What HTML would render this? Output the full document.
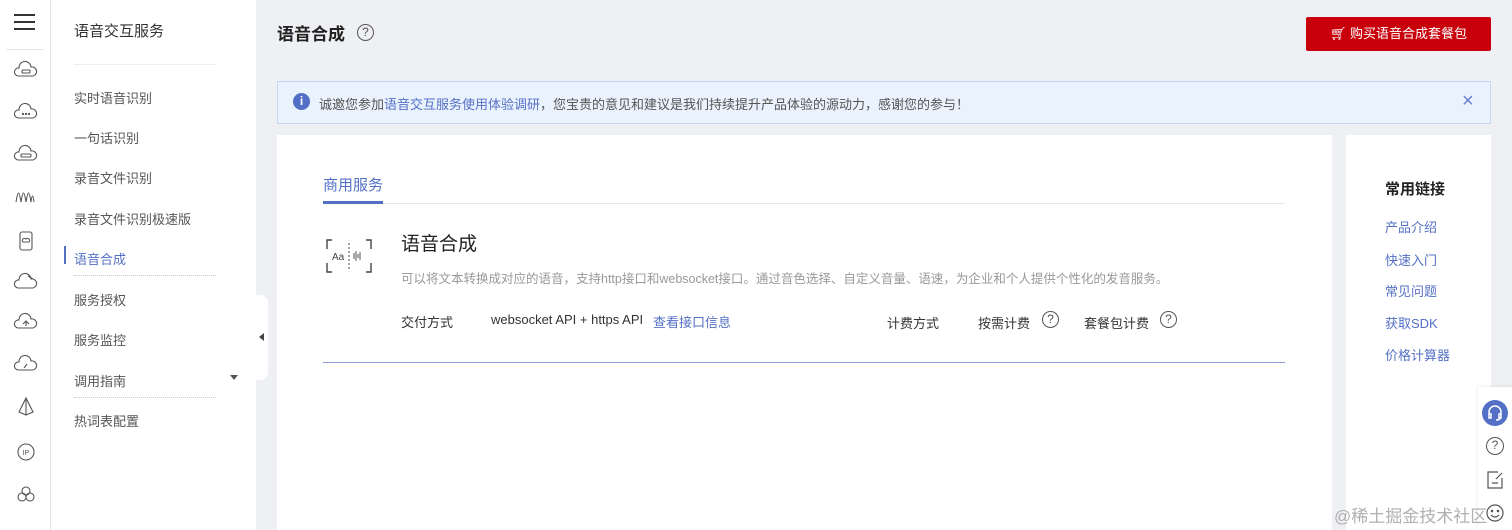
<!DOCTYPE html>
<html><head><meta charset="utf-8"><style>
*{margin:0;padding:0;box-sizing:border-box}
body{width:1512px;height:530px;overflow:hidden;background:#eff0f3;font-family:"Liberation Sans","Noto Sans CJK SC",sans-serif;position:relative;color:#333}
.abs{position:absolute}
#rail{left:0;top:0;width:51px;height:530px;background:#fff;border-right:1px solid #e6e6e6}
#side{left:51px;top:0;width:205px;height:530px;background:#fff}
.mi{position:absolute;left:23px;font-size:13px;color:#555}
.dot{position:absolute;left:23px;width:142px;border-top:1px dotted #ccc}
.card{background:#fff}
.blue{color:#5470c6}
.q{display:inline-block;width:17px;height:17px;border:1.5px solid #555;border-radius:50%;font-size:12px;line-height:14px;text-align:center;color:#555;vertical-align:middle}
</style></head><body>
<div id="rail" class="abs">
 <div class="abs" style="left:14px;top:14px;width:21px;height:2px;background:#333;box-shadow:0 7px 0 #333,0 14px 0 #333"></div>
 <div class="abs" style="left:6px;top:49px;width:38px;border-top:1px solid #e6e6e6"></div>
 <svg class="abs" style="left:14px;top:58px" width="24" height="460" fill="none" stroke="#555" stroke-width="1.1">
  <g><path d="M4 18a4 4 0 0 1 1-8a6 6 0 0 1 12-1a4.5 4.5 0 0 1 2 9z"/><rect x="8" y="12" width="8" height="3" rx="1"/></g>
  <g transform="translate(0,42)"><path d="M4 18a4 4 0 0 1 1-8a6 6 0 0 1 12-1a4.5 4.5 0 0 1 2 9z"/><circle cx="9" cy="14" r=".6"/><circle cx="12" cy="14" r=".6"/><circle cx="15" cy="14" r=".6"/></g>
  <g transform="translate(0,84)"><path d="M4 18a4 4 0 0 1 1-8a6 6 0 0 1 12-1a4.5 4.5 0 0 1 2 9z"/><rect x="7" y="12" width="10" height="3" rx="1"/></g>
  <g transform="translate(0,126)"><path d="M2 18c2-12 3-12 5 0c2-12 3-12 5 0c2-12 3-12 5 0c1-8 2-8 3 0"/></g>
  <g transform="translate(0,168)"><rect x="6" y="6" width="12" height="18" rx="2"/><path d="M9 16a2 2 0 0 1 3-3a2 2 0 0 1 3 3z"/></g>
  <g transform="translate(0,210)"><path d="M4 20a4 4 0 0 1 1-8a6 6 0 0 1 12-1a4.5 4.5 0 0 1 2 9z"/><path d="M14 8l5 3"/></g>
  <g transform="translate(0,252)"><path d="M4 18a4 4 0 0 1 1-8a6 6 0 0 1 12-1a4.5 4.5 0 0 1 2 9z"/><path d="M9 14l3-3l3 3M12 11v5"/></g>
  <g transform="translate(0,294)"><path d="M4 18a4 4 0 0 1 1-8a6 6 0 0 1 12-1a4.5 4.5 0 0 1 2 9z"/><path d="M10 16l3-4"/></g>
  <g transform="translate(0,336)"><path d="M12 4l-7 14l7 3l7-3z M12 4v17"/></g>
  <g transform="translate(0,378)"><circle cx="12" cy="16" r="8"/><text x="8.5" y="19" font-size="7" fill="#555" stroke="none">IP</text></g>
  <g transform="translate(0,420)"><circle cx="12" cy="13" r="4"/><circle cx="8" cy="19" r="4"/><circle cx="16" cy="19" r="4"/></g>
 </svg>
</div>
<div id="side" class="abs">
 <div class="abs" style="left:23px;top:20px;font-size:15px;color:#333">语音交互服务</div>
 <div class="abs" style="left:23px;top:64px;width:142px;border-top:1px solid #eee"></div>
 <div class="mi" style="top:88px">实时语音识别</div>
 <div class="mi" style="top:128px">一句话识别</div>
 <div class="mi" style="top:168px">录音文件识别</div>
 <div class="mi" style="top:209px">录音文件识别极速版</div>
 <div class="abs" style="left:13px;top:246px;width:2px;height:18px;background:#5470c6"></div>
 <div class="mi blue" style="top:249px">语音合成</div>
 <div class="dot" style="top:275px"></div>
 <div class="mi" style="top:290px">服务授权</div>
 <div class="mi" style="top:330px">服务监控</div>
 <div class="mi" style="top:371px">调用指南</div>
 <div class="abs" style="left:179px;top:375px;width:0;height:0;border-left:4px solid transparent;border-right:4px solid transparent;border-top:5px solid #555"></div>
 <div class="dot" style="top:397px"></div>
 <div class="mi" style="top:411px">热词表配置</div>
</div>
<div class="abs" style="left:252px;top:295px;width:16px;height:85px;background:#fff;border-radius:0 8px 8px 0"></div>
<div class="abs" style="left:259px;top:333px;width:0;height:0;border-top:4px solid transparent;border-bottom:4px solid transparent;border-right:5px solid #444"></div>

<div class="abs" style="left:277px;top:20px;font-size:17px;font-weight:bold;color:#222">语音合成</div>
<div class="abs" style="left:357px;top:24px"><span class="q">?</span></div>
<div class="abs" style="left:1306px;top:17px;width:185px;height:34px;background:#c7000b;border-radius:2px;color:#fff;font-size:13px;line-height:34px;text-align:center">🛒︎ 购买语音合成套餐包</div>

<div class="abs" style="left:277px;top:81px;width:1214px;height:43px;background:#eaf2fd;border:1px solid #c8d4f5"></div>
<div class="abs" style="left:293px;top:93px;width:17px;height:17px;border-radius:50%;background:#5470c6;color:#fff;font-size:12px;font-weight:bold;text-align:center;line-height:17px">i</div>
<div class="abs" style="left:319px;top:94px;font-size:13px;color:#555">诚邀您参加<span class="blue">语音交互服务使用体验调研</span>，您宝贵的意见和建议是我们持续提升产品体验的源动力，感谢您的参与！</div>
<div class="abs" style="left:1462px;top:90px;font-size:20px;line-height:22px;color:#6b7fcf">×</div>

<div class="abs card" style="left:277px;top:135px;width:1055px;height:395px"></div>
<div class="abs blue" style="left:323px;top:174px;font-size:15px">商用服务</div>
<div class="abs" style="left:323px;top:203px;width:962px;border-top:1px solid #e8e8e8"></div>
<div class="abs" style="left:323px;top:201px;width:60px;height:3px;background:#5470c6"></div>
<svg class="abs" style="left:326px;top:239px" width="46" height="34" fill="none" stroke="#444" stroke-width="1.4"><path d="M6 1H1v9M6 33H1v-9M40 1h5v9M40 33h5v-9"/><path d="M23 4v26" stroke-dasharray="2 2" stroke-width="1"/><text x="6" y="21" font-size="10" fill="#444" stroke="none" font-family="Liberation Sans">Aa</text><path d="M28 14v6M30 12v10M32 15v4M34 13v8" stroke-width="0.9"/></svg>
<div class="abs" style="left:401px;top:229px;font-size:19px;color:#222">语音合成</div>
<div class="abs" style="left:401px;top:268px;font-size:12.5px;color:#999">可以将文本转换成对应的语音，支持http接口和websocket接口。通过音色选择、自定义音量、语速，为企业和个人提供个性化的发音服务。</div>
<div class="abs" style="left:401px;top:312px;font-size:13px;color:#333">交付方式</div>
<div class="abs" style="left:491px;top:312px;font-size:13px;color:#333">websocket API + https API</div>
<div class="abs blue" style="left:653px;top:312px;font-size:13px">查看接口信息</div>
<div class="abs" style="left:887px;top:313px;font-size:13px;color:#333">计费方式</div>
<div class="abs" style="left:978px;top:313px;font-size:13px;color:#333">按需计费</div>
<div class="abs" style="left:1042px;top:311px"><span class="q">?</span></div>
<div class="abs" style="left:1084px;top:313px;font-size:13px;color:#333">套餐包计费</div>
<div class="abs" style="left:1160px;top:311px"><span class="q">?</span></div>
<div class="abs" style="left:323px;top:362px;width:962px;border-top:1px solid #8a9dd6"></div>

<div class="abs card" style="left:1346px;top:135px;width:145px;height:395px"></div>
<div class="abs" style="left:1385px;top:178px;font-size:15px;font-weight:bold;color:#222">常用链接</div>
<div class="abs blue" style="left:1385px;top:217px;font-size:13px">产品介绍</div>
<div class="abs blue" style="left:1385px;top:250px;font-size:13px">快速入门</div>
<div class="abs blue" style="left:1385px;top:281px;font-size:13px">常见问题</div>
<div class="abs blue" style="left:1385px;top:313px;font-size:13px">获取SDK</div>
<div class="abs blue" style="left:1385px;top:345px;font-size:13px">价格计算器</div>

<div class="abs" style="left:1478px;top:387px;width:34px;height:143px;background:#fff;box-shadow:0 0 4px rgba(0,0,0,.1)"></div>
<div class="abs" style="left:1482px;top:400px;width:26px;height:26px;border-radius:50%;background:#5470c6"></div>
<svg class="abs" style="left:1486px;top:404px" width="18" height="18" fill="none" stroke="#fff" stroke-width="1.5"><path d="M3 11V8a6 6 0 0 1 12 0v3M3 10h2v4H3zM13 10h2v4h-2zM14 14q0 2-4 2"/></svg>
<div class="abs" style="left:1486px;top:437px"><span class="q" style="width:18px;height:18px">?</span></div>
<svg class="abs" style="left:1486px;top:470px" width="18" height="20" fill="none" stroke="#555" stroke-width="1.2"><path d="M12 2H2v16h14V8M6 13h6M10 9l6-6"/></svg>
<svg class="abs" style="left:1485px;top:502px" width="20" height="20" fill="none" stroke="#555" stroke-width="1.2"><circle cx="10" cy="11" r="8"/><circle cx="7" cy="9" r=".7"/><circle cx="13" cy="9" r=".7"/><path d="M6 13q4 4 8 0"/></svg>
<div class="abs" style="left:1334px;top:506px;font-size:17px;color:rgba(150,150,150,.75);line-height:22px">@稀土掘金技术社区</div>
</body></html>
